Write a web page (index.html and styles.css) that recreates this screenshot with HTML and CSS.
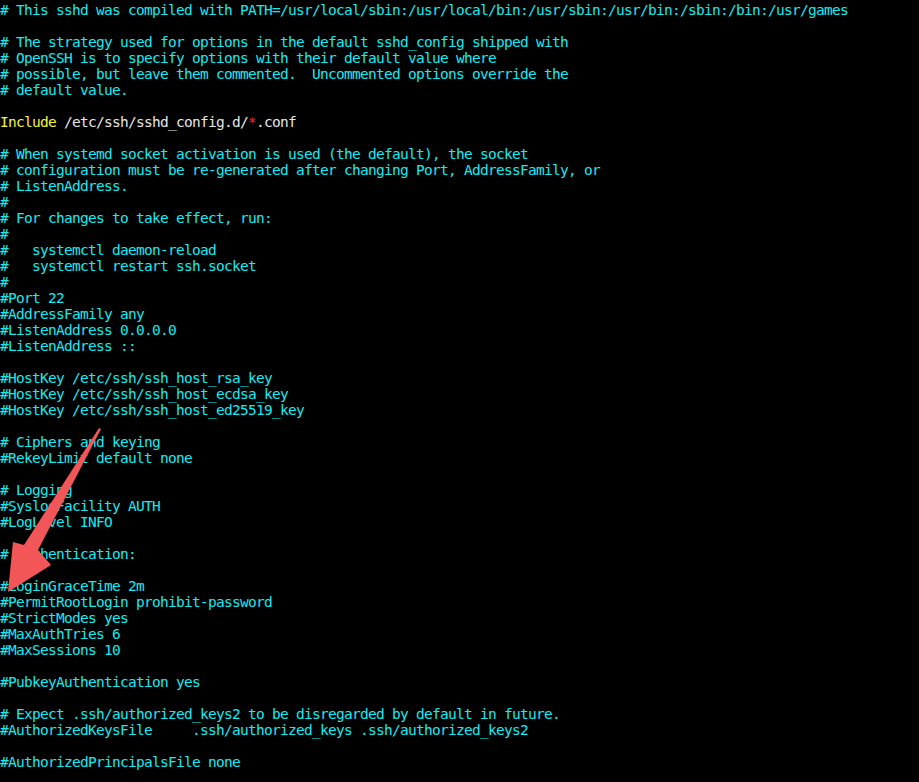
FILE: index.html
```html
<!DOCTYPE html>
<html>
<head>
<meta charset="utf-8">
<link rel="stylesheet" href="styles.css">
</head>
<body>
<div class="term">
<pre class="screen"># This sshd was compiled with PATH=/usr/local/sbin:/usr/local/bin:/usr/sbin:/usr/bin:/sbin:/bin:/usr/games

# The strategy used for options in the default sshd_config shipped with
# OpenSSH is to specify options with their default value where
# possible, but leave them commented.  Uncommented options override the
# default value.

<span class="kw">Include</span> <span class="path">/etc/ssh/sshd_config.d/</span><span class="star">*</span><span class="path">.conf</span>

# When systemd socket activation is used (the default), the socket
# configuration must be re-generated after changing Port, AddressFamily, or
# ListenAddress.
#
# For changes to take effect, run:
#
#   systemctl daemon-reload
#   systemctl restart ssh.socket
#
#Port 22
#AddressFamily any
#ListenAddress 0.0.0.0
#ListenAddress ::

#HostKey /etc/ssh/ssh_host_rsa_key
#HostKey /etc/ssh/ssh_host_ecdsa_key
#HostKey /etc/ssh/ssh_host_ed25519_key

# Ciphers and keying
#RekeyLimit default none

# Logging
#SyslogFacility AUTH
#LogLevel INFO

# Authentication:

#LoginGraceTime 2m
#PermitRootLogin prohibit-password
#StrictModes yes
#MaxAuthTries 6
#MaxSessions 10

#PubkeyAuthentication yes

# Expect .ssh/authorized_keys2 to be disregarded by default in future.
#AuthorizedKeysFile     .ssh/authorized_keys .ssh/authorized_keys2

#AuthorizedPrincipalsFile none
</pre>
<svg class="arrow" width="110" height="170" viewBox="0 0 110 170">
<polygon points="101,4 38,125 51,140 8,167 13,117 24,120 99,3" fill="#f25656"/>
</svg>
</div>
</body>
</html>
```
FILE: styles.css
```css
html, body {
  margin: 0;
  padding: 0;
  background: #000;
}
.term {
  position: relative;
  width: 919px;
  height: 782px;
  overflow: hidden;
  background: #000;
}
.screen {
  margin: 0;
  padding: 2px 0 0 0;
  font-family: "DejaVu Sans Mono", "Liberation Mono", monospace;
  font-size: 14.5px;
  letter-spacing: -0.73px;
  line-height: 16px;
  color: #14ecf2;
  white-space: pre;
}
.kw {
  color: #f4f43c;
}
.path {
  color: #e6e6e6;
}
.star {
  color: #ff2a2a;
}
.arrow {
  position: absolute;
  left: 0;
  top: 425px;
}
```
